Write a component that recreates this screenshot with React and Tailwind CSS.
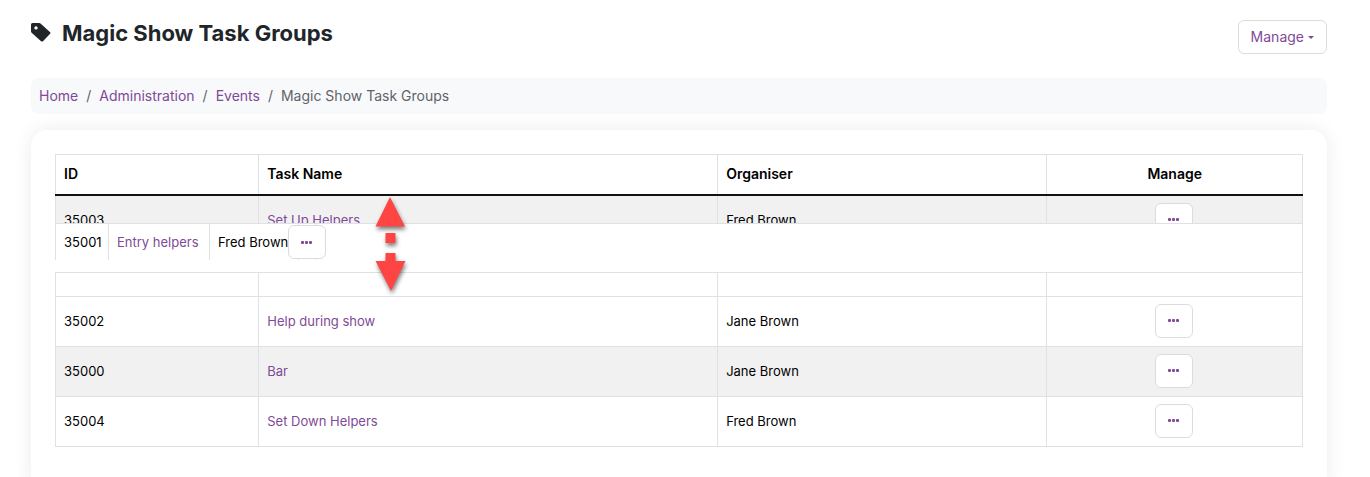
import { Fragment } from 'react'

const CRUMBS = ['Home', 'Administration', 'Events']

const TASKS = [
  { id: 35003, name: 'Set Up Helpers', organiser: 'Fred Brown', striped: true },
  { id: 35001, name: 'Entry helpers', organiser: 'Fred Brown', dragging: true },
  { id: 35002, name: 'Help during show', organiser: 'Jane Brown' },
  { id: 35000, name: 'Bar', organiser: 'Jane Brown', striped: true },
  { id: 35004, name: 'Set Down Helpers', organiser: 'Fred Brown' },
]

function TagIcon() {
  return (
    <svg viewBox="0 0 20 20" className="w-5 h-5" fill="currentColor" aria-hidden="true">
      <path fillRule="evenodd" d="M1.500 0H8a2 2 0 0 1 1.500.6l9.400 8.300a1.500 1.500 0 0 1 0 2.200l-6.700 6.900a1.700 1.700 0 0 1-2.400 0L.6 9.700A2 2 0 0 1 0 8.300V1.500A1.500 1.500 0 0 1 1.500 0ZM5 3.200a1.700 1.700 0 1 0 0 3.400a1.700 1.700 0 0 0 0-3.400Z" />
    </svg>
  )
}

function RowMenu({ id }) {
  return (
    <button aria-label={`Actions for task ${id}`}
      className="inline-flex items-center justify-center shrink-0 w-[38px] h-[34px] bg-white border border-[#dcdcdc] rounded-md text-[#7f4a97]">
      <svg viewBox="0 0 12 3" className="w-3 h-[3px]" fill="currentColor" aria-hidden="true">
        <rect x="0" y="0" width="3" height="3" rx="1" />
        <rect x="4" y="0" width="3" height="3" rx="1" />
        <rect x="8" y="0" width="3" height="3" rx="1" />
      </svg>
    </button>
  )
}

function DragArrows() {
  return (
    <svg viewBox="0 0 40 106" className="absolute top-[40px] left-[316px] w-10 h-[106px] drop-shadow-[1px_3px_2px_rgba(0,0,0,0.5)] pointer-events-none" fill="#ff4444" aria-hidden="true">
      <path d="M19 3L34 32.500H4.500Z" />
      <path d="M14.500 39h10v10h-10Z" />
      <path d="M14.500 59h10v8h10L20 97 4.500 67h10Z" />
    </svg>
  )
}

export default function App() {
  const dragged = TASKS.find(t => t.dragging)

  return (
    <div className="h-screen overflow-hidden bg-white font-[Inter,sans-serif] text-[13px] leading-5 text-black">
      <div className="pl-[31px] pr-[43px] pt-5">
        {/* Header */}
        <div className="flex items-start justify-between mb-6">
          <h1 className="flex items-center gap-[11px] text-[22px] leading-[26px] font-bold text-[#212529]">
            <TagIcon />
            Magic Show Task Groups
          </h1>
          <button className="flex items-center gap-1 h-[34px] px-3 border border-[#dcdcdc] rounded-md text-sm text-[#7f4a97]">
            Manage
            <span className="border-x-3 border-t-3 border-x-transparent border-t-current" />
          </button>
        </div>

        {/* Breadcrumb */}
        <nav className="flex gap-2 h-9 items-center px-2 mb-4 rounded-lg bg-[#f8f9fb] text-sm text-[#5f6368]">
          {CRUMBS.map(c => (
            <Fragment key={c}>
              <a href="#" className="text-[#7f4a97]">{c}</a>
              <span>/</span>
            </Fragment>
          ))}
          <span>Magic Show Task Groups</span>
        </nav>

        {/* Task groups */}
        <div className="bg-white rounded-2xl p-6 pb-12 shadow-[0_0_20px_rgba(0,0,0,0.08)]">
          <div className="relative">
            <table className="w-full table-fixed border-collapse border border-[#dee2e6]">
              <thead>
                <tr className="h-10 text-left text-sm border-b-2 border-[#111]">
                  <th className="w-[16.300%] px-2 font-semibold border-r border-r-[#dee2e6]">ID</th>
                  <th className="w-[36.800%] px-2 font-semibold border-r border-r-[#dee2e6]">Task Name</th>
                  <th className="w-[26.400%] px-2 font-semibold border-r border-r-[#dee2e6]">Organiser</th>
                  <th className="px-2 font-semibold text-center">Manage</th>
                </tr>
              </thead>
              <tbody>
                {TASKS.map(t => (
                  <tr key={t.id} className={`h-[50px] first:h-[52px] border-b border-[#dee2e6] ${t.striped ? 'bg-[#f1f1f1]' : ''}`}>
                    <td className="px-2 pb-[2px] border-r border-[#dee2e6]">{!t.dragging && t.id}</td>
                    <td className="px-2 pb-[2px] border-r border-[#dee2e6]">
                      {!t.dragging && <a href="#" className="text-[#7f4a97]">{t.name}</a>}
                    </td>
                    <td className="px-2 pb-[2px] border-r border-[#dee2e6]">{!t.dragging && t.organiser}</td>
                    <td className="pl-2 pr-[10px] pb-[2px]">
                      <div className="flex justify-center">{!t.dragging && <RowMenu id={t.id} />}</div>
                    </td>
                  </tr>
                ))}
              </tbody>
            </table>

            {/* Row being dragged */}
            <div className="absolute inset-x-0 top-[69px] h-[50px] bg-white border-y border-r border-[#dee2e6]">
              <table className="table-fixed w-[261px] border-collapse">
                <tbody>
                  <tr className="h-9">
                    <td className="w-[53px] px-2 border-x border-[#dee2e6]">{dragged.id}</td>
                    <td className="w-[101px] px-2 border-r border-[#dee2e6] whitespace-nowrap">
                      <a href="#" className="text-[#7f4a97]">{dragged.name}</a>
                    </td>
                    <td className="w-[89px] px-2 border-r border-[#dee2e6] whitespace-nowrap">{dragged.organiser}</td>
                    <td className="px-2 border-r border-[#dee2e6]">
                      <div className="flex justify-center w-0"><RowMenu id={dragged.id} /></div>
                    </td>
                  </tr>
                </tbody>
              </table>
            </div>
            <DragArrows />
          </div>
        </div>
      </div>
    </div>
  )
}
